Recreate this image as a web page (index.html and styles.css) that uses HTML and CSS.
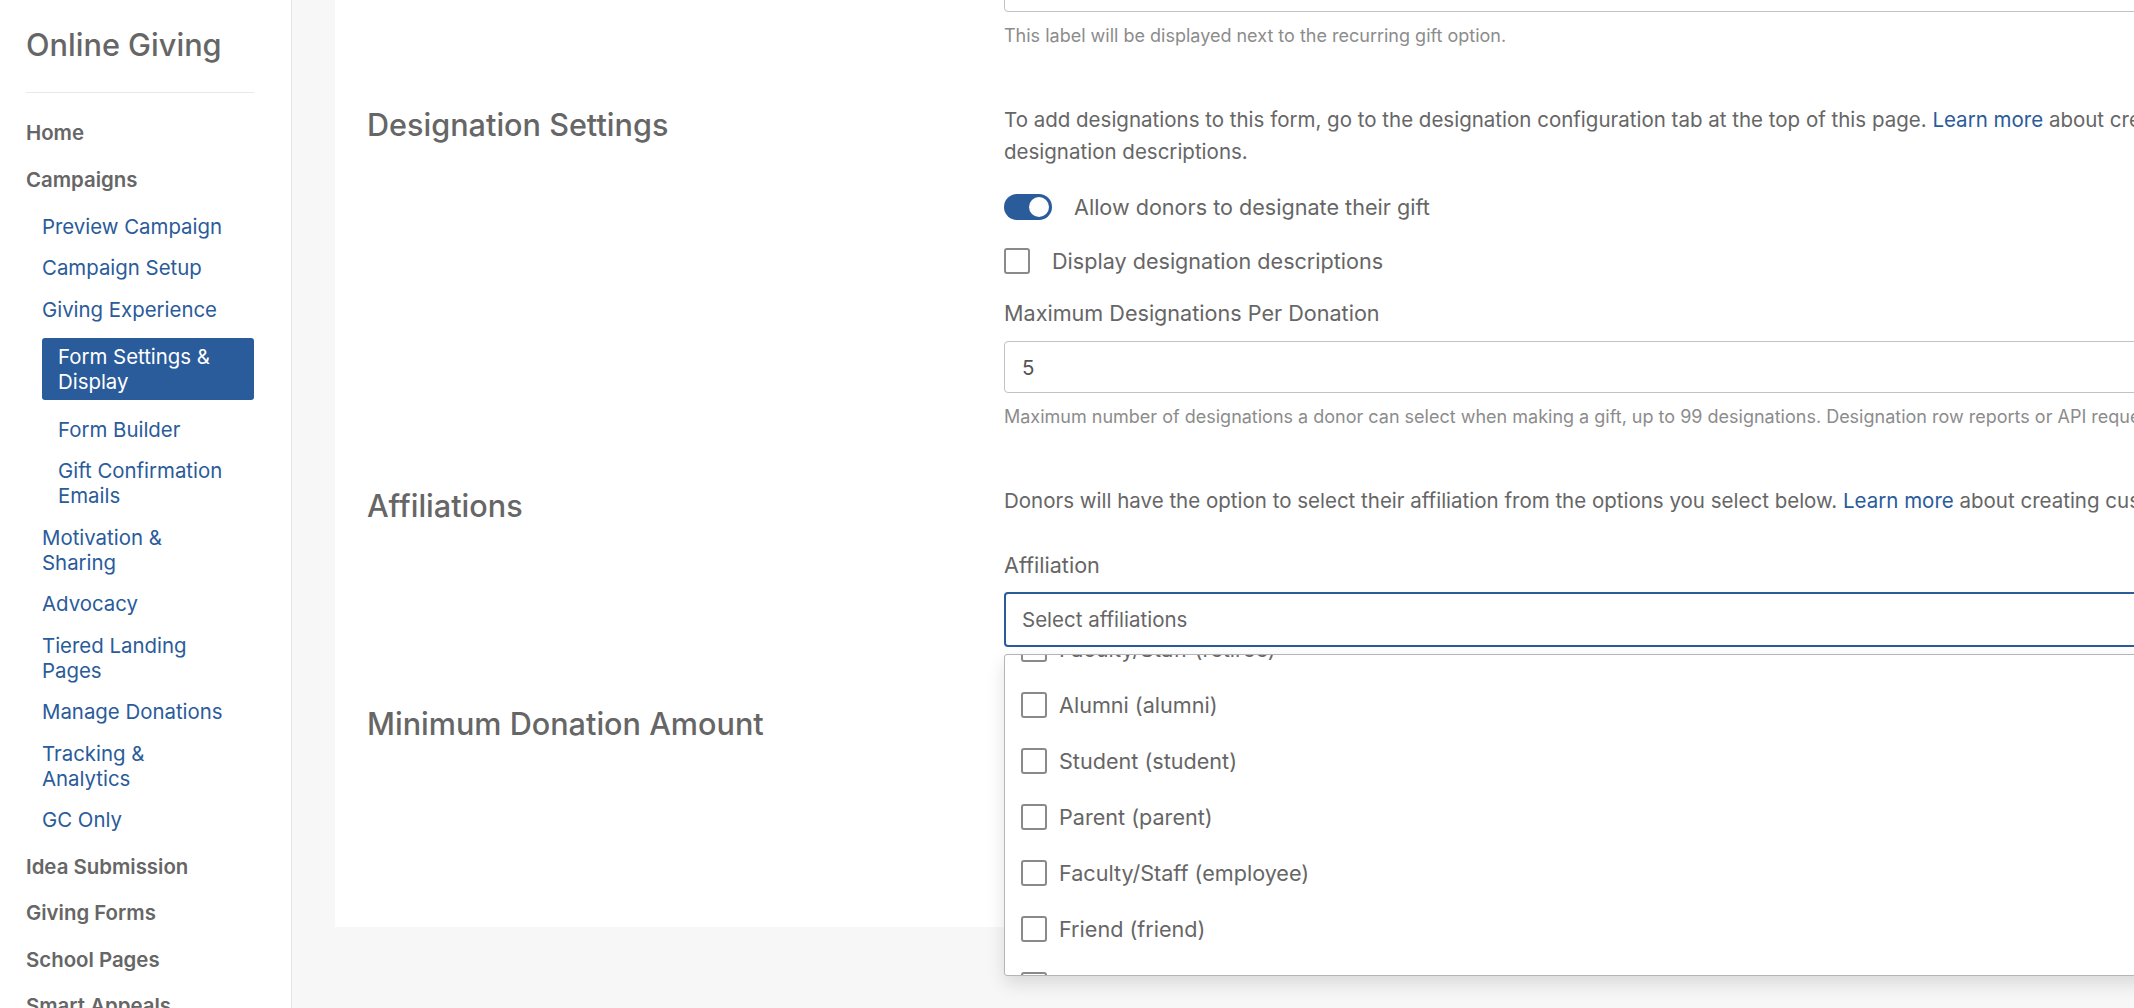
FILE: index.html
```html
<!DOCTYPE html>
<html lang="en">
<head>
<meta charset="utf-8">
<title>Online Giving – Form Settings &amp; Display</title>
<link rel="stylesheet" href="styles.css">
</head>
<body>
<div class="app">
  <aside class="sidebar">
    <h1 class="brand">Online Giving</h1>
    <hr class="rule">
    <nav>
      <ul class="nav">
        <li class="nav-item"><a href="#">Home</a></li>
        <li class="nav-item"><a href="#">Campaigns</a>
          <ul class="subnav">
            <li><a href="#">Preview Campaign</a></li>
            <li><a href="#">Campaign Setup</a></li>
            <li><a href="#">Giving Experience</a>
              <ul class="subsubnav">
                <li class="is-active"><a href="#">Form Settings &amp; Display</a></li>
                <li><a href="#">Form Builder</a></li>
                <li><a href="#">Gift Confirmation Emails</a></li>
              </ul>
            </li>
            <li><a href="#">Motivation &amp; Sharing</a></li>
            <li><a href="#">Advocacy</a></li>
            <li><a href="#">Tiered Landing Pages</a></li>
            <li><a href="#">Manage Donations</a></li>
            <li><a href="#">Tracking &amp; Analytics</a></li>
            <li><a href="#">GC Only</a></li>
          </ul>
        </li>
        <li class="nav-item"><a href="#">Idea Submission</a></li>
        <li class="nav-item"><a href="#">Giving Forms</a></li>
        <li class="nav-item"><a href="#">School Pages</a></li>
        <li class="nav-item"><a href="#">Smart Appeals</a></li>
      </ul>
    </nav>
  </aside>

  <main class="main">
    <div class="card">
      <!-- recurring gift label (top of this section is scrolled out of view) -->
      <section class="row">
        <div class="row-title"></div>
        <div class="row-body">
          <input class="text-input" type="text" value="">
          <p class="help">This label will be displayed next to the recurring gift option.</p>
        </div>
      </section>

      <section class="row">
        <h2 class="row-title">Designation Settings</h2>
        <div class="row-body">
          <p class="lead">To add designations to this form, go to the designation configuration tab at the top of this page. <a href="#">Learn more</a> about creating designation descriptions.</p>
          <div class="option">
            <span class="toggle is-on"><span class="knob"></span></span>
            <span>Allow donors to designate their gift</span>
          </div>
          <div class="option">
            <span class="checkbox"></span>
            <span>Display designation descriptions</span>
          </div>
          <label class="field-label">Maximum Designations Per Donation</label>
          <input class="text-input" type="text" value="5">
          <p class="help">Maximum number of designations a donor can select when making a gift, up to 99 designations. Designation row reports or API requests may be affected by large numbers of designations.</p>
        </div>
      </section>

      <section class="row">
        <h2 class="row-title">Affiliations</h2>
        <div class="row-body">
          <p class="lead lead-single">Donors will have the option to select their affiliation from the options you select below. <a href="#">Learn more</a> about creating custom affiliations.</p>
          <label class="field-label">Affiliation</label>
          <div class="multiselect">
            <div class="select-box">Select affiliations</div>
            <div class="dropdown">
              <ul class="dropdown-list">
                <li><span class="checkbox"></span>Faculty/Staff (retiree)</li>
                <li><span class="checkbox"></span>Alumni (alumni)</li>
                <li><span class="checkbox"></span>Student (student)</li>
                <li><span class="checkbox"></span>Parent (parent)</li>
                <li><span class="checkbox"></span>Faculty/Staff (employee)</li>
                <li><span class="checkbox"></span>Friend (friend)</li>
                <li><span class="checkbox"></span>Other (other)</li>
              </ul>
            </div>
          </div>
        </div>
      </section>

      <section class="row">
        <h2 class="row-title">Minimum Donation Amount</h2>
        <div class="row-body">
          <p class="lead">Set the smallest amount a donor can give on this form.</p>
          <label class="field-label">Minimum Amount</label>
          <input class="text-input" type="text" value="$5.00">
        </div>
      </section>
    </div>
  </main>
</div>
</body>
</html>
```

FILE: styles.css
```css
* {
  box-sizing: border-box;
}

html,
body {
  margin: 0;
  height: 100%;
  overflow: hidden;
}

body {
  font-family: "Inter", "Liberation Sans", sans-serif;
  color: #666;
  background: #f7f7f7;
}

a {
  color: #2a5b9a;
  text-decoration: none;
}

.app {
  display: flex;
  height: 100vh;
}

/* ---------- sidebar ---------- */

.sidebar {
  flex: 0 0 292px;
  height: 100vh;
  overflow: hidden;
  background: #fff;
  border-right: 1px solid #e6e6e6;
  padding: 25px 37px 0 26px;
}

.brand {
  margin: 0;
  font-size: 30.7px;
  line-height: 40px;
  font-weight: 500;
  color: #666;
}

.rule {
  margin: 27px 0 0;
  border: 0;
  border-top: 1px solid #e8e8e8;
}

.nav,
.subnav,
.subsubnav {
  list-style: none;
  margin: 0;
  padding: 0;
}

.nav {
  margin-top: 26.5px;
}

.nav-item + .nav-item {
  margin-top: 21.5px;
}

.nav-item:nth-child(2) {
  margin-top: 22.5px;
}

.nav-item > a {
  display: block;
  font-size: 20.4px;
  line-height: 25px;
  font-weight: 600;
  color: #666;
}

.subnav {
  margin-top: 21.5px;
  padding-left: 16px;
}

.subnav > li + li {
  margin-top: 16.5px;
}

.subnav a {
  display: block;
  font-size: 20.4px;
  line-height: 25px;
  font-weight: 400;
  color: #2a5b9a;
  padding-right: 22px;
}

.subsubnav {
  margin-top: 16.5px;
}

.subsubnav > li + li {
  margin-top: 16.5px;
}

.subsubnav a {
  padding-left: 16px;
}

.subsubnav .is-active a {
  background: #2a5b9a;
  color: #fff;
  border-radius: 3px;
  padding-top: 6px;
  padding-bottom: 6px;
}

/* ---------- main ---------- */

.main {
  flex: 1 1 auto;
  min-width: 0;
  overflow: hidden;
  padding-left: 43px;
}

.card {
  width: 1910px;
  margin-top: -40px;
  background: #fff;
  padding: 0 0 64px 32px;
  display: flex;
  flex-direction: column;
  gap: 56px;
}

.row {
  display: grid;
  grid-template-columns: 637px 1230px;
  align-items: start;
}

.row-title {
  margin: 3px 0 0;
  font-size: 30.6px;
  line-height: 36px;
  font-weight: 500;
  color: #666;
}

.row-body {
  display: flex;
  flex-direction: column;
  align-items: flex-start;
}

.lead {
  margin: 0;
  font-size: 20.5px;
  line-height: 32px;
}

.lead-single {
  white-space: nowrap;
}

.help {
  margin: 12px 0 0;
  font-size: 18px;
  line-height: 24px;
  color: #8c8c8c;
  white-space: nowrap;
}

.text-input {
  display: block;
  width: 100%;
  height: 52px;
  margin: 0;
  padding: 0 17px;
  border: 1px solid #c2c2c2;
  border-radius: 4px;
  font: inherit;
  font-size: 20.5px;
  color: #555;
  background: #fff;
}

.field-label {
  display: block;
  font-size: 21.6px;
  line-height: 32px;
  margin-top: 20px;
}

.field-label + .text-input {
  margin-top: 12px;
}

.option {
  display: flex;
  align-items: center;
  gap: 22px;
  height: 32px;
  font-size: 21.6px;
  margin-top: 22px;
}

.lead + .option {
  margin-top: 23px;
}

.toggle {
  position: relative;
  flex: 0 0 48px;
  width: 48px;
  height: 26px;
  border-radius: 13px;
  background: #c9c9c9;
}

.toggle.is-on {
  background: #2a5b9a;
}

.knob {
  position: absolute;
  top: 3px;
  left: 3px;
  width: 20px;
  height: 20px;
  border-radius: 50%;
  background: #fff;
}

.toggle.is-on .knob {
  left: 25px;
}

.checkbox {
  flex: 0 0 26px;
  width: 26px;
  height: 26px;
  border: 2px solid #8a8a8a;
  border-radius: 3px;
  background: #fff;
}

/* ---------- affiliation multiselect ---------- */

.lead + .field-label {
  margin-top: 32px;
}

.multiselect {
  position: relative;
  width: 100%;
  margin-top: 11px;
}

.select-box {
  height: 55px;
  border: 2px solid #2a5b9a;
  border-radius: 4px;
  padding: 0 16px;
  display: flex;
  align-items: center;
  font-size: 20.5px;
  color: #666;
  background: #fff;
}

.dropdown {
  position: absolute;
  z-index: 5;
  top: calc(100% + 7px);
  left: 0;
  width: 100%;
  height: 322px;
  overflow: hidden;
  background: #fff;
  border: 1px solid #b5b5b5;
  border-radius: 3px;
  box-shadow: 0 8px 18px rgba(0, 0, 0, 0.12);
}

/* list is scrolled part way down */
.dropdown-list {
  list-style: none;
  margin: -34px 0 0;
  padding: 0;
}

.dropdown-list li {
  display: flex;
  align-items: center;
  gap: 12px;
  height: 56px;
  padding-left: 16px;
  font-size: 21.6px;
  color: #666;
}
```
